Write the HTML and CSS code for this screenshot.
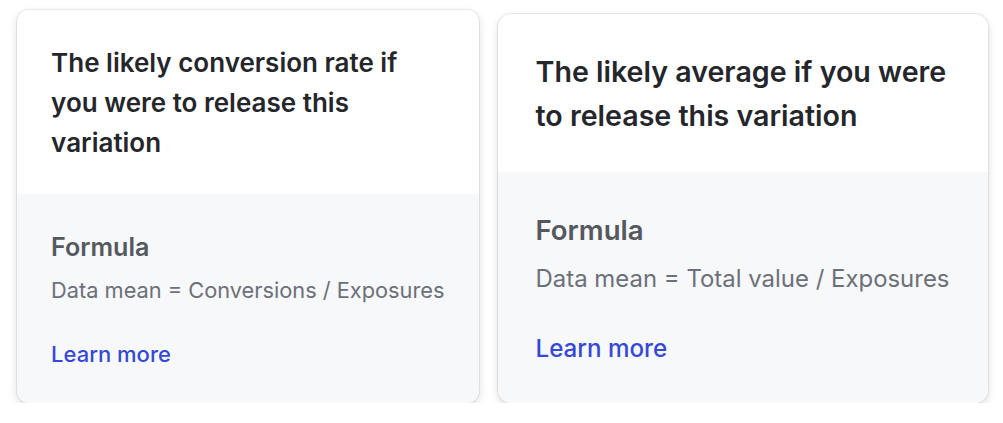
FILE: index.html
```html
<!DOCTYPE html>
<html lang="en">
<head>
  <meta charset="UTF-8">
  <title>Metric tooltips</title>
  <link rel="stylesheet" href="styles.css">
</head>
<body>
  <div class="cards">
    <div class="card card-sm">
      <div class="card-top">
        <p class="card-title">The likely conversion rate if you were to release this variation</p>
      </div>
      <div class="card-bottom">
        <h3 class="formula-label">Formula</h3>
        <p class="formula">Data mean = Conversions / Exposures</p>
        <a class="learn-more" href="#">Learn more</a>
      </div>
    </div>

    <div class="card card-lg">
      <div class="card-top">
        <p class="card-title">The likely average if you were to release this variation</p>
      </div>
      <div class="card-bottom">
        <h3 class="formula-label">Formula</h3>
        <p class="formula">Data mean = Total value / Exposures</p>
        <a class="learn-more" href="#">Learn more</a>
      </div>
    </div>
  </div>
</body>
</html>
```

FILE: styles.css
```css
body {
  margin: 0;
  font-family: Inter, "Noto Sans", sans-serif;
  background-color: #fff;
}
.cards {
  display: flex;
  align-items: flex-start;
  gap: 19px;
  padding: 10px 0 0 17px;
}
.card {
  background-color: #fff;
  border-radius: 12px;
  overflow: hidden;
  box-shadow: 0 0 0 1px rgba(0, 0, 0, 0.07), 0 3px 8px rgba(0, 0, 0, 0.14);
}
.card-sm {
  width: 462px;
  font-size: 22px;
}
.card-lg {
  width: 490px;
  font-size: 24.2px;
  margin-top: 4px;
  border-radius: 13px;
}
.card-top {
  padding: 1.48em 1.55em 1.43em;
}
.card-title {
  margin: 0;
  font-size: 1.182em;
  line-height: 1.538;
  font-weight: 600;
  color: #24262b;
}
.card-bottom {
  background-color: #f7f8fa;
  padding: 1.695em 1em 1.5em 1.55em;
  display: flex;
  flex-direction: column;
  align-items: flex-start;
}
.formula-label {
  margin: 0;
  font-size: 1.14em;
  line-height: 1.28;
  font-weight: 600;
  color: #55595f;
}
.formula {
  margin: 0.5em 0 0;
  font-size: 0.99em;
  line-height: 1.47;
  white-space: nowrap;
  color: #6c7079;
}
.learn-more {
  margin-top: 1.455em;
  line-height: 1.455;
  font-weight: 500;
  color: #3548d6;
  text-decoration: none;
}
```
